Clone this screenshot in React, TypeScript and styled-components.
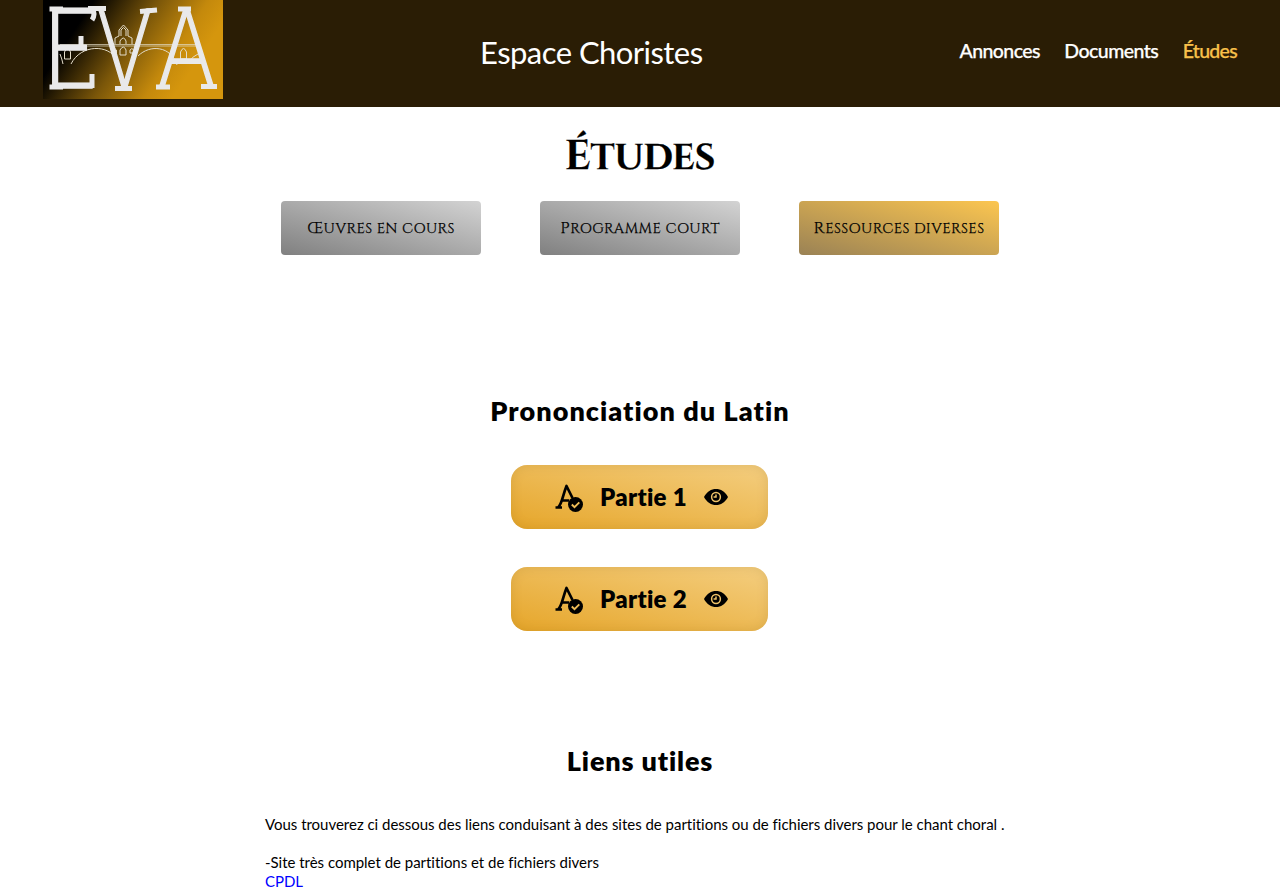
import React from "react";
import styled, { createGlobalStyle } from "styled-components";

const GlobalStyle = createGlobalStyle`
  *, *::before, *::after { box-sizing: border-box; }
  body {
    margin: 0;
    height: 896px;
    overflow: hidden;
    background: #fff;
    color: #000;
    font-family: "Gill Sans MT", "Gill Sans", Lato, sans-serif;
    font-size: 15px;
    font-variant-ligatures: none;
  }
  h1, h2, p { margin: 0; }
  a { text-decoration: none; }
`;

const Header = styled.header`
  display: flex;
  justify-content: space-between;
  height: 107px;
  padding: 0 43px;
  background: #2a1d05;
`;

const Logo = styled.svg`
  display: block;
  width: 180px;
  height: 99px;
`;

const SiteTitle = styled.p`
  color: #fff;
  font-size: 31px;
  line-height: 40px;
  padding-top: 32px;
  letter-spacing: -0.55px;
`;

const Nav = styled.nav`
  display: flex;
  gap: 24.5px;
  padding-top: 38px;
`;

const NavLink = styled.a<{ $active?: boolean; $track: number }>`
  color: ${(p) => (p.$active ? "#f9c14b" : "#fff")};
  font-size: 19.5px;
  font-weight: 500;
  line-height: 26px;
  letter-spacing: ${(p) => p.$track}px;
  -webkit-text-stroke: 0.25px currentColor;
`;

const Main = styled.main`
  display: flex;
  flex-direction: column;
  align-items: center;
`;

const PageTitle = styled.h1`
  height: 52px;
  margin-top: 24px;
  font-family: Cinzel, "Liberation Serif", serif;
  font-size: 36px;
  font-weight: 700;
  line-height: 52px;
  letter-spacing: -0.2px;
  text-transform: uppercase;
  -webkit-text-stroke: 0.3px currentColor;
  &::first-letter { font-size: 41px; }
`;

const Tabs = styled.div`
  display: flex;
  gap: 59px;
  margin-top: 18px;
`;

const Tab = styled.button<{ $active?: boolean }>`
  display: block;
  width: 200px;
  height: 54px;
  padding: 0;
  border: 0;
  border-radius: 4px;
  color: #000;
  background: ${(p) =>
    p.$active
      ? "linear-gradient(to right top, #9a8255, #fcc650)"
      : "linear-gradient(to right top, #808080, #d3d3d3)"};
  font-family: Cinzel, "Liberation Serif", serif;
  font-size: 14.5px;
  line-height: 54px;
  letter-spacing: 0.45px;
  text-align: center;
  text-transform: uppercase;
  -webkit-text-stroke: 0.25px currentColor;
  &::first-letter { font-size: 16.5px; }
`;

const SectionTitle = styled.h2<{ $top: number; $track: number }>`
  margin-top: ${(p) => p.$top}px;
  font-size: 27px;
  font-weight: 800;
  line-height: 34px;
  letter-spacing: ${(p) => p.$track}px;
`;

const Parts = styled.div`
  display: flex;
  flex-direction: column;
  gap: 38px;
  margin: 37px 1px 0 0;
`;

const PartButton = styled.a`
  display: flex;
  align-items: center;
  width: 257px;
  height: 64px;
  padding-left: 42px;
  border-radius: 16px;
  color: #000;
  background: linear-gradient(to right top, #e6a62a, #f4ce80);
  box-shadow: inset 0 0 12px rgba(120, 80, 0, 0.16);
`;

const PartLabel = styled.span`
  width: 90px;
  margin: 0 14px 0 17px;
  font-size: 24px;
  font-weight: 800;
  line-height: 32px;
  letter-spacing: 0.3px;
  white-space: nowrap;
`;

const LinksText = styled.div`
  width: 750px;
  margin-top: 37px;
  line-height: 19px;
  letter-spacing: -0.02px;
`;

const Line = styled.p<{ $gap?: boolean }>`
  margin-bottom: ${(p) => (p.$gap ? 19 : 0)}px;
  white-space: nowrap;
`;

const TextLink = styled.a`
  color: #00f;
`;

const EvaLogo = () => (
  <Logo viewBox="0 0 180 99" role="img">
    <defs>
      <linearGradient id="sky" gradientUnits="userSpaceOnUse" x1="34" y1="26" x2="134" y2="92">
        <stop offset="0" stopColor="#000" />
        <stop offset="0.45" stopColor="#7a5609" />
        <stop offset="0.8" stopColor="#c4890c" />
        <stop offset="1" stopColor="#d5960d" />
      </linearGradient>
    </defs>
    <rect width="180" height="99" fill="url(#sky)" />
    <g fill="none" stroke="#e3dcc9" strokeWidth="1">
      <path d="M17 44.5H155M17 46H155" strokeWidth="0.7" />
      <path d="M17 54q2 5 3 10M28 64C38 44 66 44 74 60M95 56C107 44 128 46 134 65M145 64q4-8 10-10" />
      <path d="M21.5 59v-7q3-7 6 0v7zM137.5 59v-7q3-7 6 0v7z" />
      <path d="M72 44v-6l4-2v-6l4.500-5 4.500 5v6l4 2v6M78 36v-6l2.500-2.500 2.500 2.500v6M77 44v-3q3.500-6 6 0v3M77 55v-5q3.500-6 6 0v5zM70 53v-3q2-3 3.500 0v3zM87 53v-3q2-3 3.500 0v3z" />
    </g>
    <g
      fill="#e9e9ea"
      stroke="#e9e9ea"
      strokeWidth="1.6"
      strokeLinejoin="round"
      fontFamily="Lato, sans-serif"
      fontWeight="300"
      fontSize="112"
    >
      <text x="0" y="88" textLength="54" lengthAdjust="spacingAndGlyphs">E</text>
      <text x="54.500" y="89" textLength="54" lengthAdjust="spacingAndGlyphs">V</text>
      <text x="115" y="88" textLength="57" lengthAdjust="spacingAndGlyphs">A</text>
    </g>
    <g fill="none" stroke="#e9e9ea" strokeWidth="5">
      <path d="M6.500 9H20M6.500 87H20M49 74v14M38 36v11M49 8q4 6 0 12" />
      <path d="M45 8.500H63M97 11.500L114 10M72 88.500H89M135 9H148M113 87H127M158 86.500H174" />
    </g>
  </Logo>
);

const LetterCheck = () => (
  <svg width="30" height="30" viewBox="0 0 30 30">
    <path
      d="M5 25.500C9 22.500 9.500 14 13.500 4L19.500 16M9 18.500H16M2.500 25.500H9"
      fill="none"
      stroke="#000"
      strokeWidth="2.7"
      strokeLinejoin="round"
    />
    <circle cx="22.500" cy="22.500" r="7.500" />
    <path d="M18.800 22.500l2.700 2.700 4.800-4.900" fill="none" stroke="#efbd58" strokeWidth="1.9" />
  </svg>
);

const Eye = () => (
  <svg width="24" height="18" viewBox="0 0 24 18">
    <path d="M0 9C3 3.500 7.200 1 12 1s9 2.500 12 8c-3 5.500-7.200 8-12 8S3 14.500 0 9z" />
    <circle cx="12" cy="9" r="4.400" fill="none" stroke="#f0c369" strokeWidth="1.5" />
    <path d="M12 6.600v2.400H9.600" fill="none" stroke="#f0c369" strokeWidth="1.5" />
  </svg>
);

const parts = ["Partie 1", "Partie 2"];

export default function App() {
  return (
    <>
      <GlobalStyle />
      <Header>
        <EvaLogo />
        <SiteTitle>Espace Choristes</SiteTitle>
        <Nav>
          <NavLink $track={-0.6}>Annonces</NavLink>
          <NavLink $track={-0.55}>Documents</NavLink>
          <NavLink $track={-0.7} $active>Études</NavLink>
        </Nav>
      </Header>
      <Main>
        <PageTitle>Études</PageTitle>
        <Tabs>
          <Tab>Œuvres en cours</Tab>
          <Tab>Programme court</Tab>
          <Tab $active>Ressources diverses</Tab>
        </Tabs>
        <SectionTitle $top={139} $track={1.05}>Prononciation du Latin</SectionTitle>
        <Parts>
          {parts.map((label) => (
            <PartButton key={label}>
              <LetterCheck />
              <PartLabel>{label}</PartLabel>
              <Eye />
            </PartButton>
          ))}
        </Parts>
        <SectionTitle $top={113} $track={0.85}>Liens utiles</SectionTitle>
        <LinksText>
          <Line $gap>
            Vous trouverez ci dessous des liens conduisant à des sites de partitions ou de fichiers divers pour le chant choral .
          </Line>
          <Line>-Site très complet de partitions et de fichiers divers</Line>
          <Line>
            <TextLink>CPDL</TextLink>
          </Line>
        </LinksText>
      </Main>
    </>
  );
}
